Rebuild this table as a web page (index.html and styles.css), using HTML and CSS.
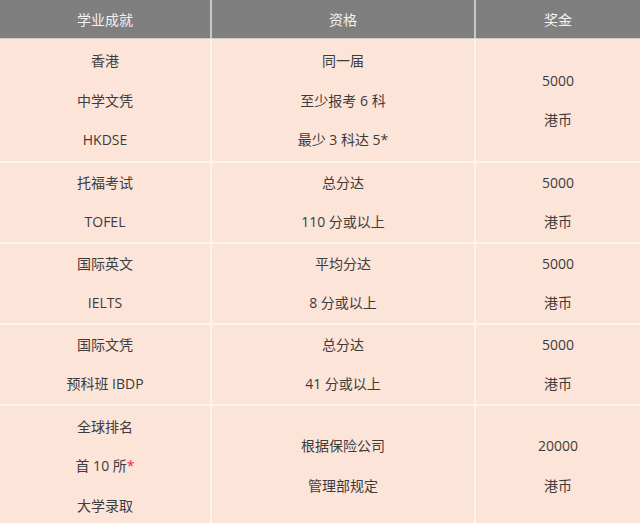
FILE: index.html
```
<!DOCTYPE html>
<html lang="zh">
<head>
<meta charset="utf-8">
<link rel="stylesheet" href="styles.css">
</head>
<body>
<table class="award">
  <colgroup>
    <col class="c1"><col class="c2"><col class="c3">
  </colgroup>
  <thead>
    <tr><th>学业成就</th><th>资格</th><th>奖金</th></tr>
  </thead>
  <tbody>
    <tr class="first">
      <td><p>香港</p><p>中学文凭</p><p>HKDSE</p></td>
      <td><p>同一届</p><p>至少报考 6 科</p><p>最少 3 科达 5*</p></td>
      <td><p>5000</p><p>港币</p></td>
    </tr>
    <tr>
      <td><p>托福考试</p><p>TOFEL</p></td>
      <td><p>总分达</p><p>110 分或以上</p></td>
      <td><p>5000</p><p>港币</p></td>
    </tr>
    <tr>
      <td><p>国际英文</p><p>IELTS</p></td>
      <td><p>平均分达</p><p>8 分或以上</p></td>
      <td><p>5000</p><p>港币</p></td>
    </tr>
    <tr>
      <td><p>国际文凭</p><p>预科班 IBDP</p></td>
      <td><p>总分达</p><p>41 分或以上</p></td>
      <td><p>5000</p><p>港币</p></td>
    </tr>
    <tr class="last">
      <td><p>全球排名</p><p>首 10 所<span class="star">*</span></p><p>大学录取</p></td>
      <td><p>根据保险公司</p><p>管理部规定</p></td>
      <td><p>20000</p><p>港币</p></td>
    </tr>
  </tbody>
</table>
</body>
</html>
```
FILE: styles.css
```
html, body {
  margin: 0;
  padding: 0;
  background: #fde5da;
}
body {
  font-family: "Open Sans", "Noto Sans CJK SC", sans-serif;
  font-size: 14px;
  color: #3c3c3c;
}
.award {
  width: 640px;
  table-layout: fixed;
  border-collapse: separate;
  border-spacing: 0;
}
.c1 { width: 212px; }
.c2 { width: 264px; }
.c3 { width: 164px; }
.award th {
  background: #7f7f7f;
  color: #f2f2f2;
  font-weight: normal;
  height: 39px;
  padding: 0;
  box-sizing: border-box;
  text-align: center;
  vertical-align: middle;
  border-bottom: 1px solid #d3ccc8;
  border-right: 2px solid #c9c9c9;
}
.award th:last-child { border-right: none; }
.award td {
  background: #fde4d9;
  padding: 0;
  text-align: center;
  vertical-align: middle;
  border-right: 2px solid #fff3ee;
  border-bottom: 2px solid #fff3ee;
}
.award td:last-child { border-right: none; }
.award p {
  margin: 0;
  line-height: 39.5px;
}
.first td { padding-top: 2px; padding-bottom: 1px; }
.last td { border-bottom: none; padding-top: 1px; }
.star { color: #e2333a; }
```
